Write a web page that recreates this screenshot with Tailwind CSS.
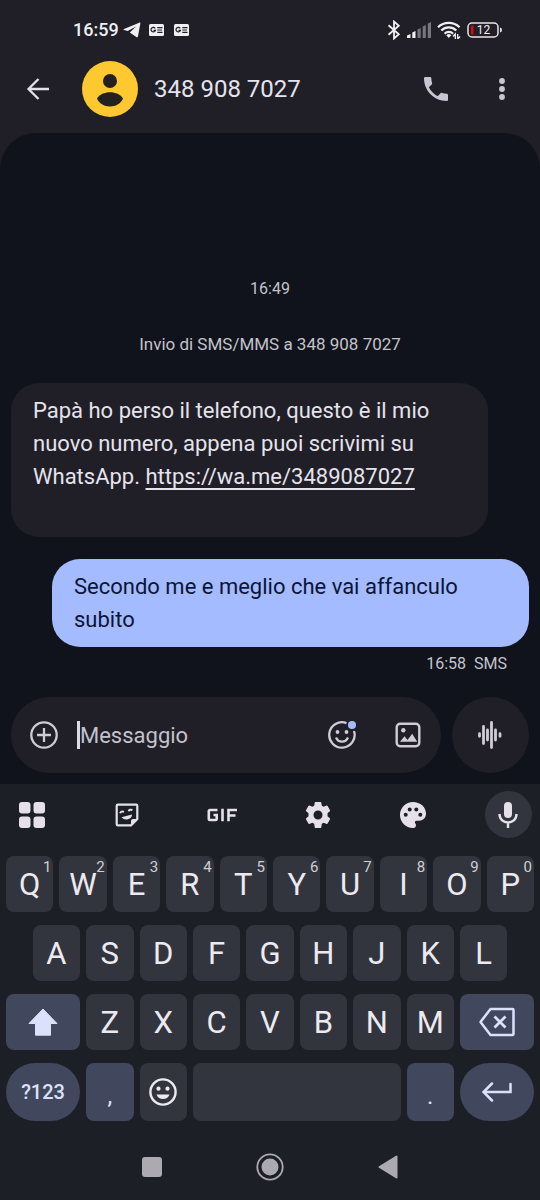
<!DOCTYPE html>
<html lang="it">
<head>
<meta charset="utf-8">
<meta name="viewport" content="width=device-width, initial-scale=1">
<title>348 908 7027</title>
<script src="https://cdn.jsdelivr.net/npm/@tailwindcss/browser@4"></script>
</head>
<body class="flex min-h-screen flex-col bg-[#201f27] font-[Roboto,'Noto_Sans',sans-serif] text-[#e5e3ec]">

<!-- Status bar -->
<div class="flex h-15 items-center justify-between pl-[73px] pr-[38px]">
  <div class="flex items-center gap-2">
    <div class="flex items-center gap-1">
      <time class="text-lg font-medium text-[#eeeef0]">16:59</time>
      <svg class="h-4 w-[18px]" viewBox="0 0 18 16" fill="#f0f0f2" aria-label="Telegram"><path d="M1 7 16.200.7c.7-.3 1.300.2 1.100 1l-2.300 12.600c-.2 1-.9 1.200-1.700.7L6.800 10.500 13 4.500 4.700 8.900 1 8c-.7-.2-.7-.7 0-1Z"/></svg>
    </div>
    <div class="flex items-center gap-[10px]">
      <svg class="h-3 w-[15px]" viewBox="0 0 15 12" aria-label="News"><rect width="15" height="12" rx="1.500" fill="#f0f0f2"/><path d="M6.200 4.300A2.300 2.300 0 1 0 6.500 6.300H4.500M8.300 3.700H13.500M8.300 6H13M8.300 8.300H13.500" fill="none" stroke="#201f27" stroke-width="1.200"/></svg>
      <svg class="h-3 w-[15px]" viewBox="0 0 15 12" aria-label="News"><rect width="15" height="12" rx="1.500" fill="#f0f0f2"/><path d="M6.200 4.300A2.300 2.300 0 1 0 6.500 6.300H4.500M8.300 3.700H13.500M8.300 6H13M8.300 8.300H13.500" fill="none" stroke="#201f27" stroke-width="1.200"/></svg>
    </div>
  </div>
  <div class="flex items-center gap-[6px]">
    <svg class="h-5 w-[14px]" viewBox="0 0 14 20" fill="none" stroke="#f0f0f2" stroke-width="1.800" aria-label="Bluetooth"><path d="m1.500 5.300 10.300 9L7 18.500v-17l4.800 4.200-10.300 9"/></svg>
    <svg class="h-4 w-6" viewBox="0 0 24 16" aria-label="Segnale"><g fill="#f0f0f2"><path d="M0 13.500 3.500 12v4H0ZM5.300 10.500 8.500 9v7H5.300Z"/></g><g fill="#77767c"><path d="M10.500 7.500 13.700 6v10h-3.200ZM15.700 4.500 18.800 3v13h-3.100ZM20.800 1.500 24 0v16h-3.200Z"/></g></svg>
    <svg class="h-[18px] w-6" viewBox="0 0 24 18" aria-label="Wi-Fi"><g fill="none" stroke="#f0f0f2" stroke-width="2.200"><path d="M1 6.200a15.500 15.500 0 0 1 21.500 0M4.300 9.500a10.700 10.700 0 0 1 15 0M7.600 12.700a6 6 0 0 1 8.500 0"/></g><path d="M9.300 14.300a3.600 3.600 0 0 1 5 0L11.800 17Z" fill="#f0f0f2"/><path d="m16 15.500 2.300-2.500v5M20.700 13v5L23 15.500" fill="none" stroke="#f0f0f2" stroke-width="1.300"/></svg>
    <svg class="h-4 w-[35px]" viewBox="0 0 35 16" aria-label="Batteria 12%"><rect x="1" y="1" width="30" height="14" rx="4" fill="none" stroke="#e6e6e8" stroke-width="1.500"/><path d="M4 4.500Q4 3.500 5 3.500H6.500V12.500H5Q4 12.500 4 11.500Z" fill="#e0080c"/><path d="M33 5.500q2 .2 2 2.500t-2 2.500Z" fill="#e6e6e8"/><text x="16.500" y="12.300" text-anchor="middle" font-size="12" fill="#f0f0f2">12</text></svg>
  </div>
</div>

<!-- Conversation header -->
<header class="flex h-[73px] items-start px-6 pt-px">
  <div class="flex h-14 w-full items-center">
    <button class="flex size-7 items-center justify-center" aria-label="Indietro"><svg class="size-6" viewBox="0 0 24 24" fill="none" stroke="#e2e0e8" stroke-width="2.300"><path d="M23 12H2.500M12.500 2l-10 10 10 10"/></svg></button>
    <svg class="ml-[30px] size-14" viewBox="0 0 56 56" aria-hidden="true"><circle cx="28" cy="28" r="28" fill="#fdc830"/><circle cx="28" cy="20" r="7" fill="#24221f"/><path d="M15 37.500C17.500 33.300 22.500 31.200 28 31.200S38.500 33.300 41 37.500C39 42.300 34 45.500 28 45.500S17 42.300 15 37.500Z" fill="#24221f"/></svg>
    <h1 class="ml-4 flex-1 text-2xl">348 908 7027</h1>
    <button class="flex size-8 items-center justify-center" aria-label="Chiama"><svg class="size-8" viewBox="0 0 24 24" fill="#c9c6d3"><path d="M20 15.500c-1.250 0-2.450-.2-3.570-.57-.35-.11-.74-.03-1.020.24l-2.200 2.200c-2.830-1.440-5.150-3.750-6.590-6.590l2.200-2.200c.28-.28.36-.67.25-1.020A11.360 11.360 0 0 1 8.500 4c0-.55-.45-1-1-1H4c-.55 0-1 .45-1 1 0 9.390 7.610 17 17 17 .55 0 1-.45 1-1v-3.500c0-.55-.45-1-1-1Z"/></svg></button>
    <button class="ml-9 flex w-7 items-center justify-center" aria-label="Altre opzioni"><svg class="h-6 w-2" viewBox="0 0 8 24" fill="#c9c6d3"><circle cx="4" cy="4" r="2.900"/><circle cx="4" cy="12" r="2.900"/><circle cx="4" cy="20" r="2.900"/></svg></button>
  </div>
</header>

<!-- Messages -->
<main class="flex flex-1 flex-col justify-end rounded-t-[36px] bg-[#10131b] px-[11px] pb-[11px]">
  <time class="text-center text-base leading-[22px] text-[#c3c3cb]">16:49</time>
  <p class="mt-[33px] text-center text-[17px] leading-[22px] text-[#c3c3cb]">Invio di SMS/MMS a 348 908 7027</p>
  <div class="mt-7 mr-[41px] rounded-[28px] bg-[#201f27] px-[22px] pt-[11px] pb-11 text-[22px] leading-[33px]">Papà ho perso il telefono, questo è il mio nuovo numero, appena puoi scrivimi su WhatsApp. <a href="https://wa.me/3489087027" class="underline decoration-2 underline-offset-4">https://wa.me/3489087027</a></div>
  <div class="mt-[22px] ml-[41px] rounded-[28px] bg-[#a5bbff] px-[22px] py-[11px] text-[22px] leading-[33px] text-[#0b1536]">Secondo me e meglio che vai affanculo subito</div>
  <p class="mt-[6px] mr-[22px] text-right text-base leading-[22px] text-[#c3c3cb]">16:58&nbsp; SMS</p>

  <!-- Composer -->
  <form class="mt-[22px] flex items-center gap-[11px]">
    <div class="flex h-[76px] flex-1 items-center rounded-full bg-[#201f27] px-[18px]">
      <button type="button" aria-label="Allega"><svg class="size-[30px]" viewBox="0 0 30 30" fill="none" stroke="#cfccd8" stroke-width="2.300"><circle cx="15" cy="15" r="12.700"/><path d="M15 8v14M8 15h14"/></svg></button>
      <span class="ml-[18px] h-7 w-[3px] bg-[#dcdae4]"></span>
      <input type="text" aria-label="Messaggio" placeholder="Messaggio" class="w-0 flex-1 bg-transparent text-[22px] outline-none placeholder:text-[#c4c2cc]">
      <button type="button" aria-label="Emoji"><svg class="size-[30px]" viewBox="0 0 30 30" fill="none" stroke="#cfccd8" stroke-width="2.300"><path d="M19.500 3.100A12.700 12.700 0 1 0 27 11"/><path d="M9 17.500c2.500 5.600 9.500 5.600 12 0"/><circle cx="10.500" cy="12" r="1.900" fill="#cfccd8" stroke="none"/><circle cx="19.500" cy="12" r="1.900" fill="#cfccd8" stroke="none"/><circle cx="25" cy="5" r="4" fill="#a5bbff" stroke="none"/></svg></button>
      <button type="button" class="ml-9" aria-label="Galleria"><svg class="size-[30px]" viewBox="0 0 30 30"><rect x="3.700" y="3.700" width="22.600" height="22.600" rx="3.500" fill="none" stroke="#cfccd8" stroke-width="2.400"/><circle cx="10.300" cy="10.300" r="2.200" fill="#cfccd8"/><path d="m7 21.700 4.500-5.500 3 3.700 4.700-6.200 5 8Z" fill="#cfccd8"/></svg></button>
    </div>
    <button type="button" class="flex h-[76px] w-[77px] items-center justify-center rounded-full bg-[#201f27]" aria-label="Messaggio vocale"><svg class="size-7" viewBox="0 0 28 28" fill="none" stroke="#cfccd8" stroke-width="2.800" stroke-linecap="round"><path d="M2.500 12.700v2.600M6.500 5.500v17M10.500 9v10M14.500 1.500v25M18.500 9v10M23 12.700v2.600"/></svg></button>
  </form>
</main>

<!-- Keyboard -->
<section class="bg-[#1c1f26]" aria-label="Tastiera">
  <div class="flex items-center justify-between px-2 pt-[7px] pb-[18px]">
    <button class="flex size-[47px] items-center justify-center" aria-label="Menu"><svg class="size-[26px]" viewBox="0 0 26 26" fill="#e6e1e9"><rect width="11.500" height="11.500" rx="3"/><rect x="14.500" width="11.500" height="11.500" rx="3"/><rect y="14.500" width="11.500" height="11.500" rx="3"/><rect x="14.500" y="14.500" width="11.500" height="11.500" rx="3"/></svg></button>
    <button class="flex size-[47px] items-center justify-center" aria-label="Adesivi"><svg class="size-6" viewBox="0 0 24 24"><path d="M2.800 1.700h18.400q1.100 0 1.100 1.100V16l-6.300 6.300H2.800q-1.100 0-1.100-1.100V2.800q0-1.100 1.100-1.100Z" fill="none" stroke="#e6e1e9" stroke-width="2.200"/><path d="M16 22.500V18q0-2 2-2h4.500Z" fill="#e6e1e9"/><path d="M5.200 10.200q.8-2.400 3.800-1.300M13.600 8.300q.8-2.400 3.800-1.300" fill="none" stroke="#e6e1e9" stroke-width="2"/><path d="M6.500 14.200 17 11.500q0 3.500-4 4.700-4 .9-6.500-2Z" fill="#e6e1e9"/></svg></button>
    <button class="flex size-[47px] items-center justify-center" aria-label="GIF"><svg class="h-[14px] w-[30px]" viewBox="0 0 30 14" fill="none" stroke="#e6e1e9" stroke-width="2.600"><path d="M10.500 2H3q-1.200 0-1.200 1.200v7.600Q1.800 12 3 12h5.500q1.200 0 1.200-1.200V7H6.500M15.500.7v12.600M21.500 13.300V2H30M21.500 7.500h7"/></svg></button>
    <button class="flex size-[47px] items-center justify-center" aria-label="Impostazioni"><svg class="size-[26px]" viewBox="0 0 26 26"><path fill="#e6e1e9" fill-rule="evenodd" d="M10.500 0h5q.7 0 .8.700l.5 3q1 .4 1.900 1.100l2.900-1.200q.7-.2 1 .4l2.400 4.200q.4.600-.2 1l-2.300 2q.1 1.800 0 3.100l2.300 1.900q.6.400.2 1l-2.400 4.300q-.3.600-1 .4l-2.900-1.200q-.9.700-1.900 1.100l-.5 3.500q-.1.700-.8.700h-5q-.7 0-.8-.7l-.5-3.500q-1-.4-1.900-1.100l-2.900 1.200q-.7.200-1-.4L1 17.200q-.4-.6.200-1l2.300-1.900q-.1-1.300 0-3.100l-2.300-2q-.6-.4-.2-1L3.400 4q.3-.6 1-.4l2.900 1.200q.9-.7 1.900-1.100l.5-3q.1-.7.800-.7ZM13 8.500a4.500 4.500 0 1 0 0 9 4.500 4.500 0 0 0 0-9Z"/></svg></button>
    <button class="flex size-[47px] items-center justify-center" aria-label="Temi"><svg class="size-[26px]" viewBox="0 0 26 26"><path d="M13 0c7.300 0 13 5 13 11.600 0 4.400-3 7.200-7 7.200h-2.500c-1.500 0-2 1.200-1.300 2.400 1.700 2.300.5 4.800-2.200 4.800C5.800 26 0 20.200 0 13S5.800 0 13 0Z" fill="#e6e1e9"/><g fill="#1c1f26"><circle cx="5.700" cy="12.700" r="2"/><circle cx="9.700" cy="7.500" r="2"/><circle cx="16.300" cy="7.500" r="2"/><circle cx="20.300" cy="12.700" r="2"/></g></svg></button>
    <button class="flex size-[47px] items-center justify-center rounded-full bg-[#33353e]" aria-label="Dettatura"><svg class="h-[26px] w-5" viewBox="0 0 20 26"><rect x="6" width="8" height="16" rx="4" fill="#e6e1e9"/><path d="M1.500 12c0 11.300 17 11.300 17 0M10 20.500V26" fill="none" stroke="#e6e1e9" stroke-width="2.400"/></svg></button>
  </div>

  <div class="grid grid-cols-20 gap-x-[6px] gap-y-[13px] px-[6px] text-[31px] leading-none text-[#eceaf0]">
    <button class="relative col-span-2 h-14 rounded-lg bg-[#33353e]">Q<sup class="absolute top-1 right-[2px] text-[15px] leading-none text-[#cfced6]">1</sup></button>
    <button class="relative col-span-2 h-14 rounded-lg bg-[#33353e]">W<sup class="absolute top-1 right-[2px] text-[15px] leading-none text-[#cfced6]">2</sup></button>
    <button class="relative col-span-2 h-14 rounded-lg bg-[#33353e]">E<sup class="absolute top-1 right-[2px] text-[15px] leading-none text-[#cfced6]">3</sup></button>
    <button class="relative col-span-2 h-14 rounded-lg bg-[#33353e]">R<sup class="absolute top-1 right-[2px] text-[15px] leading-none text-[#cfced6]">4</sup></button>
    <button class="relative col-span-2 h-14 rounded-lg bg-[#33353e]">T<sup class="absolute top-1 right-[2px] text-[15px] leading-none text-[#cfced6]">5</sup></button>
    <button class="relative col-span-2 h-14 rounded-lg bg-[#33353e]">Y<sup class="absolute top-1 right-[2px] text-[15px] leading-none text-[#cfced6]">6</sup></button>
    <button class="relative col-span-2 h-14 rounded-lg bg-[#33353e]">U<sup class="absolute top-1 right-[2px] text-[15px] leading-none text-[#cfced6]">7</sup></button>
    <button class="relative col-span-2 h-14 rounded-lg bg-[#33353e]">I<sup class="absolute top-1 right-[2px] text-[15px] leading-none text-[#cfced6]">8</sup></button>
    <button class="relative col-span-2 h-14 rounded-lg bg-[#33353e]">O<sup class="absolute top-1 right-[2px] text-[15px] leading-none text-[#cfced6]">9</sup></button>
    <button class="relative col-span-2 h-14 rounded-lg bg-[#33353e]">P<sup class="absolute top-1 right-[2px] text-[15px] leading-none text-[#cfced6]">0</sup></button>

    <button class="col-span-2 col-start-2 h-14 rounded-lg bg-[#33353e]">A</button>
    <button class="col-span-2 h-14 rounded-lg bg-[#33353e]">S</button>
    <button class="col-span-2 h-14 rounded-lg bg-[#33353e]">D</button>
    <button class="col-span-2 h-14 rounded-lg bg-[#33353e]">F</button>
    <button class="col-span-2 h-14 rounded-lg bg-[#33353e]">G</button>
    <button class="col-span-2 h-14 rounded-lg bg-[#33353e]">H</button>
    <button class="col-span-2 h-14 rounded-lg bg-[#33353e]">J</button>
    <button class="col-span-2 h-14 rounded-lg bg-[#33353e]">K</button>
    <button class="col-span-2 h-14 rounded-lg bg-[#33353e]">L</button>

    <button class="col-span-3 flex h-14 items-center justify-center rounded-lg bg-[#41475c]" aria-label="Maiuscole"><svg class="h-7 w-[30px]" viewBox="0 0 30 28" fill="#dce1fb" stroke="#dce1fb" stroke-linejoin="round"><path d="M15 1 29 15.500H22.500V27.200H7.500V15.500H1Z"/></svg></button>
    <button class="col-span-2 h-14 rounded-lg bg-[#33353e]">Z</button>
    <button class="col-span-2 h-14 rounded-lg bg-[#33353e]">X</button>
    <button class="col-span-2 h-14 rounded-lg bg-[#33353e]">C</button>
    <button class="col-span-2 h-14 rounded-lg bg-[#33353e]">V</button>
    <button class="col-span-2 h-14 rounded-lg bg-[#33353e]">B</button>
    <button class="col-span-2 h-14 rounded-lg bg-[#33353e]">N</button>
    <button class="col-span-2 h-14 rounded-lg bg-[#33353e]">M</button>
    <button class="col-span-3 flex h-14 items-center justify-center rounded-lg bg-[#41475c]" aria-label="Cancella"><svg class="h-[30px] w-9" viewBox="0 0 36 30" fill="none" stroke="#dce1fb" stroke-width="2.500" stroke-linejoin="round"><path d="M11.500 2H33.500q1 0 1 1V27q0 1-1 1H11.500L1.500 15Z"/><path d="m15.500 9.500 11 11M26.500 9.500l-11 11" stroke-width="2.800"/></svg></button>

    <button class="col-span-3 h-[58px] rounded-full bg-[#41475c] text-xl font-medium text-[#dce1fb]">?123</button>
    <button class="col-span-2 h-[58px] rounded-lg bg-[#41475c] pt-2 text-2xl text-[#dce1fb]">,</button>
    <button class="col-span-2 flex h-[58px] items-center justify-center rounded-lg bg-[#33353e]" aria-label="Emoji"><svg class="size-7" viewBox="0 0 28 28"><circle cx="14" cy="14" r="12.600" fill="none" stroke="#eceaf0" stroke-width="2.400"/><circle cx="9.500" cy="10.700" r="2.100" fill="#eceaf0"/><circle cx="18.500" cy="10.700" r="2.100" fill="#eceaf0"/><path d="M7.500 16.500h13c-2 6-11 6-13 0Z" fill="#eceaf0"/></svg></button>
    <button class="col-span-8 h-[58px] rounded-lg bg-[#33353e]" aria-label="Spazio"></button>
    <button class="col-span-2 h-[58px] rounded-lg bg-[#41475c] pt-2 text-2xl text-[#dce1fb]">.</button>
    <button class="col-span-3 flex h-[58px] items-center justify-center rounded-full bg-[#41475c]" aria-label="Invio"><svg class="h-5 w-[30px]" viewBox="0 0 30 20" fill="none" stroke="#dce1fb" stroke-width="2.500" stroke-linecap="round"><path d="M10 1.500 1.500 10l8.500 8.500M2 10H28.500V2"/></svg></button>
  </div>

  <!-- System navigation -->
  <nav class="flex h-[79px] items-center justify-center gap-[90px] pt-[13px]">
    <button class="flex w-7 justify-center" aria-label="App recenti"><svg class="size-5" viewBox="0 0 20 20"><rect width="20" height="20" rx="3" fill="#acaab0"/></svg></button>
    <button class="flex w-7 justify-center" aria-label="Home"><svg class="size-7" viewBox="0 0 28 28"><circle cx="14" cy="14" r="12.700" fill="none" stroke="#acaab0" stroke-width="1.800"/><circle cx="14" cy="14" r="8.500" fill="#acaab0"/></svg></button>
    <button class="flex w-7 justify-center" aria-label="Indietro"><svg class="h-6 w-5" viewBox="0 0 20 24"><path d="M18.500 1.500v21L1.500 12Z" fill="#acaab0" stroke="#acaab0" stroke-width="2" stroke-linejoin="round"/></svg></button>
  </nav>
</section>
</body>
</html>
